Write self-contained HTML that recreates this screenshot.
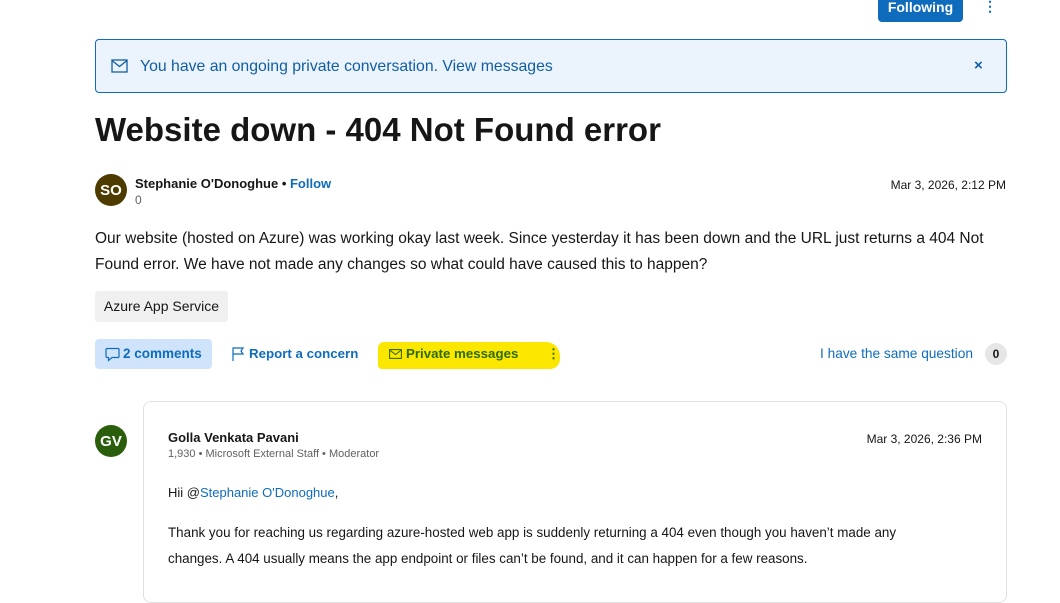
<!DOCTYPE html><html><head><style>
body{margin:0;width:1060px;height:588px;overflow:hidden;background:#fff;font-family:"Liberation Sans",sans-serif;color:#161616;position:relative}
.a{position:absolute;white-space:nowrap}
.av{position:absolute;border-radius:50%;color:#fff;font-weight:bold;display:flex;align-items:center;justify-content:center}
</style></head><body>
<div class="a" style="left:878px;top:-8px;width:85px;height:30px;background:#0f6cbd;border-radius:4px;color:#fff;font-weight:bold;font-size:14px;text-align:center;line-height:30px">Following</div>
<div class="a" style="left:983px;top:0;font-size:14px;color:#0f6cbd;font-weight:bold;line-height:12px">⋮</div>
<div class="a" style="left:95px;top:39px;width:910px;height:52px;background:#ebf3fc;border:1px solid #0f6cbd;border-radius:4px"></div>
<svg class="a" style="left:111px;top:59px" width="17" height="14" viewBox="0 0 17 14"><rect x="1" y="1" width="15" height="12" fill="none" stroke="#115ea3" stroke-width="1.3"/><path d="M1 1.5L8.5 7.5L16 1.5" fill="none" stroke="#115ea3" stroke-width="1.3"/></svg>
<div class="a" style="left:140px;top:58px;font-size:15.8px;color:#115ea3">You have an ongoing private conversation. View messages</div>
<div class="a" style="left:974px;top:57px;font-size:15px;color:#115ea3;font-weight:bold">×</div>
<div class="a" style="left:95px;top:111px;font-size:33px;font-weight:bold">Website down - 404 Not Found error</div>
<div class="av" style="left:95px;top:174px;width:32px;height:32px;background:#4d3b00;font-size:15px">SO</div>
<div class="a" style="left:135px;top:176px;font-size:13px;font-weight:bold">Stephanie O'Donoghue • <span style="color:#0f6cbd">Follow</span></div>
<div class="a" style="left:135px;top:193px;font-size:12px;color:#616161">0</div>
<div class="a" style="right:54px;top:178px;font-size:12px">Mar 3, 2026, 2:12 PM</div>
<div class="a" style="left:95px;top:226px;font-size:15.5px;line-height:26px;white-space:normal;width:912px">Our website (hosted on Azure) was working okay last week. Since yesterday it has been down and the URL just returns a 404 Not Found error. We have not made any changes so what could have caused this to happen?</div>
<div class="a" style="left:95px;top:291px;width:133px;height:31px;background:#f0f0f0;border-radius:3px;font-size:14px;line-height:31px;text-align:center">Azure App Service</div>
<div class="a" style="left:95px;top:339px;width:117px;height:30px;background:#cfe4fa;border-radius:4px"></div>
<svg class="a" style="left:105px;top:347px" width="15" height="15" viewBox="0 0 15 15"><path d="M2 1.5h11a1 1 0 0 1 1 1v7a1 1 0 0 1-1 1H7l-3.5 3v-3H2a1 1 0 0 1-1-1v-7a1 1 0 0 1 1-1z" fill="none" stroke="#0f6cbd" stroke-width="1.2"/></svg>
<div class="a" style="left:123px;top:346px;font-size:13.5px;font-weight:bold;color:#0f6cbd">2 comments</div>
<svg class="a" style="left:232px;top:347px" width="12" height="14" viewBox="0 0 12 14"><path d="M1 14V1h10l-2 3 2 3H1" fill="none" stroke="#0f6cbd" stroke-width="1.2"/></svg>
<div class="a" style="left:249px;top:346px;font-size:13.3px;font-weight:bold;color:#0f6cbd">Report a concern</div>
<div class="a" style="left:378px;top:342px;width:182px;height:27px;background:#fbe600;border-radius:6px 14px 10px 4px"></div>
<svg class="a" style="left:389px;top:349px" width="13" height="10" viewBox="0 0 13 10"><rect x=".6" y=".6" width="11.8" height="8.8" fill="none" stroke="#3a6b00" stroke-width="1.1"/><path d="M.6 1l5.9 4.5L12.4 1" fill="none" stroke="#3a6b00" stroke-width="1.1"/></svg>
<div class="a" style="left:406px;top:346px;font-size:13.3px;font-weight:bold;color:#2e6b00">Private messages</div>
<div class="a" style="left:547px;top:346px;font-size:13px;font-weight:bold;color:#2e6b00">⋮</div>
<div class="a" style="left:820px;top:346px;font-size:13.7px;color:#0f6cbd">I have the same question</div>
<div class="a" style="left:985px;top:343px;width:22px;height:22px;border-radius:50%;background:#e6e6e6;font-size:12px;font-weight:bold;text-align:center;line-height:22px">0</div>
<div class="a" style="left:143px;top:401px;width:862px;height:200px;border:1px solid #e0e0e0;border-radius:8px"></div>
<div class="av" style="left:95px;top:425px;width:32px;height:32px;background:#2b5e0a;font-size:15px">GV</div>
<div class="a" style="left:168px;top:430px;font-size:13px;font-weight:bold">Golla Venkata Pavani</div>
<div class="a" style="left:168px;top:448px;font-size:11px;color:#616161">1,930 • Microsoft External Staff • Moderator</div>
<div class="a" style="right:78px;top:432px;font-size:12px">Mar 3, 2026, 2:36 PM</div>
<div class="a" style="left:168px;top:485px;font-size:13px">Hii @<span style="color:#0f6cbd">Stephanie O'Donoghue</span>,</div>
<div class="a" style="left:168px;top:520px;font-size:13.4px;line-height:26px;white-space:normal;width:730px">Thank you for reaching us regarding azure-hosted web app is suddenly returning a 404 even though you haven’t made any changes. A 404 usually means the app endpoint or files can’t be found, and it can happen for a few reasons.</div>
</body></html>
